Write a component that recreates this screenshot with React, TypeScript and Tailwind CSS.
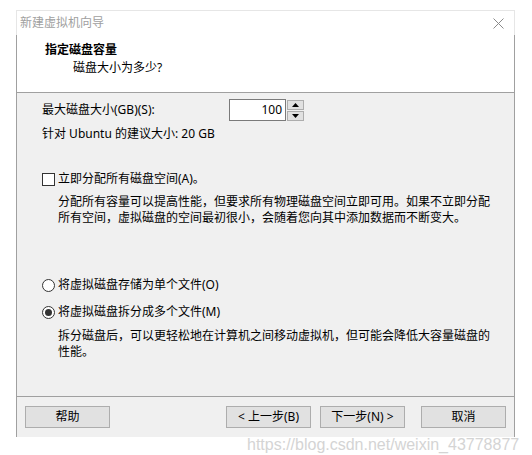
const font = "font-['Noto_Sans','Noto_Sans_CJK_SC',sans-serif]";

function Spin() {
	return (
		<div className="flex items-center">
			<div className="w-[57px] h-[22px] border border-[#7a7a7a] bg-white flex items-center justify-end pr-[3px] text-[12px] leading-none">
				100
			</div>
			<div className="flex flex-col ml-[1px] gap-[1px]">
				<div className="w-[17px] h-[10px] border border-[#adadad] bg-[#e1e1e1] flex items-center justify-center">
					<svg width="7" height="4" viewBox="0 0 7 4">
						<path d="M0 4L3.5 0L7 4Z" fill="#000" />
					</svg>
				</div>
				<div className="w-[17px] h-[10px] border border-[#adadad] bg-[#e1e1e1] flex items-center justify-center">
					<svg width="7" height="4" viewBox="0 0 7 4">
						<path d="M0 0L3.5 4L7 0Z" fill="#000" />
					</svg>
				</div>
			</div>
		</div>
	);
}

function Btn({ label, className = "" }: { label: string; className?: string }) {
	return (
		<div
			className={`w-[85px] h-[22px] border border-[#adadad] bg-[#e1e1e1] flex items-center justify-center text-[12px] leading-none ${className}`}
		>
			{label}
		</div>
	);
}

export default function App() {
	return (
		<div className={`relative w-[532px] h-[455px] overflow-hidden bg-white pt-[10px] pl-[16px] text-black ${font}`}>
			<div className="w-[499px]">
				{/* Title bar */}
				<div className="h-[25px] border-t border-x border-[#e6e6e6] bg-white flex items-center justify-between pl-[3px] pr-[10px]">
					<span className="text-[12px] text-[#a0a0a0]">新建虚拟机向导</span>
					<svg width="11" height="11" viewBox="0 0 11 11">
						<path d="M0.5 0.5L10.5 10.5M10.5 0.5L0.5 10.5" stroke="#8a8a8a" strokeWidth="1" />
					</svg>
				</div>

				<div className="border-x border-[#a0a0a0]">
					{/* Header */}
					<div className="h-[58px] bg-white border-b border-[#a0a0a0] pl-[28px] pt-[6px]">
						<div className="text-[12px] font-bold leading-[18px]">指定磁盘容量</div>
						<div className="text-[12px] leading-[18px] pl-[28px]">磁盘大小为多少?</div>
					</div>

					{/* Body */}
					<div className="h-[304px] bg-[#f0f0f0] border-b border-[#a0a0a0] pl-[25px] pt-[6px] text-[12px]">
						<div className="flex items-center h-[22px]">
							<span className="w-[187px]">最大磁盘大小(GB)(S):</span>
							<Spin />
						</div>
						<div className="mt-[3px] h-[20px] flex items-center">针对 Ubuntu 的建议大小: 20 GB</div>

						<div className="mt-[27px] flex items-center h-[16px]">
							<div className="w-[13px] h-[13px] border border-[#333] bg-white" />
							<span className="ml-[3px]">立即分配所有磁盘空间(A)。</span>
						</div>
						<div className="mt-[7px] pl-[16px] leading-[16px]">
							分配所有容量可以提高性能，但要求所有物理磁盘空间立即可用。如果不立即分配
							<br />
							所有空间，虚拟磁盘的空间最初很小，会随着您向其中添加数据而不断变大。
						</div>

						<div className="mt-[51px] flex items-center h-[16px]">
							<div className="w-[13px] h-[13px] rounded-full border border-[#333] bg-white" />
							<span className="ml-[3px]">将虚拟磁盘存储为单个文件(O)</span>
						</div>
						<div className="mt-[11px] flex items-center h-[16px]">
							<div className="w-[13px] h-[13px] rounded-full border border-[#333] bg-white flex items-center justify-center">
								<div className="w-[7px] h-[7px] rounded-full bg-[#333]" />
							</div>
							<span className="ml-[3px]">将虚拟磁盘拆分成多个文件(M)</span>
						</div>
						<div className="mt-[8px] pl-[16px] leading-[16px]">
							拆分磁盘后，可以更轻松地在计算机之间移动虚拟机，但可能会降低大容量磁盘的
							<br />
							性能。
						</div>
					</div>

					{/* Footer */}
					<div className="h-[40px] bg-[#f0f0f0] flex items-center pl-[8px] pr-[8px]">
						<Btn label="帮助" />
						<div className="flex-1" />
						<Btn label="< 上一步(B)" />
						<Btn label="下一步(N) >" className="ml-[9px]" />
						<Btn label="取消" className="ml-[16px]" />
					</div>
				</div>
			</div>

			<div className="absolute left-[247px] top-[437px] text-[16px] text-[#d4d4d4] font-['Liberation_Sans',sans-serif] leading-none whitespace-nowrap">
				https://blog.csdn.net/weixin_43778877
			</div>
		</div>
	);
}
